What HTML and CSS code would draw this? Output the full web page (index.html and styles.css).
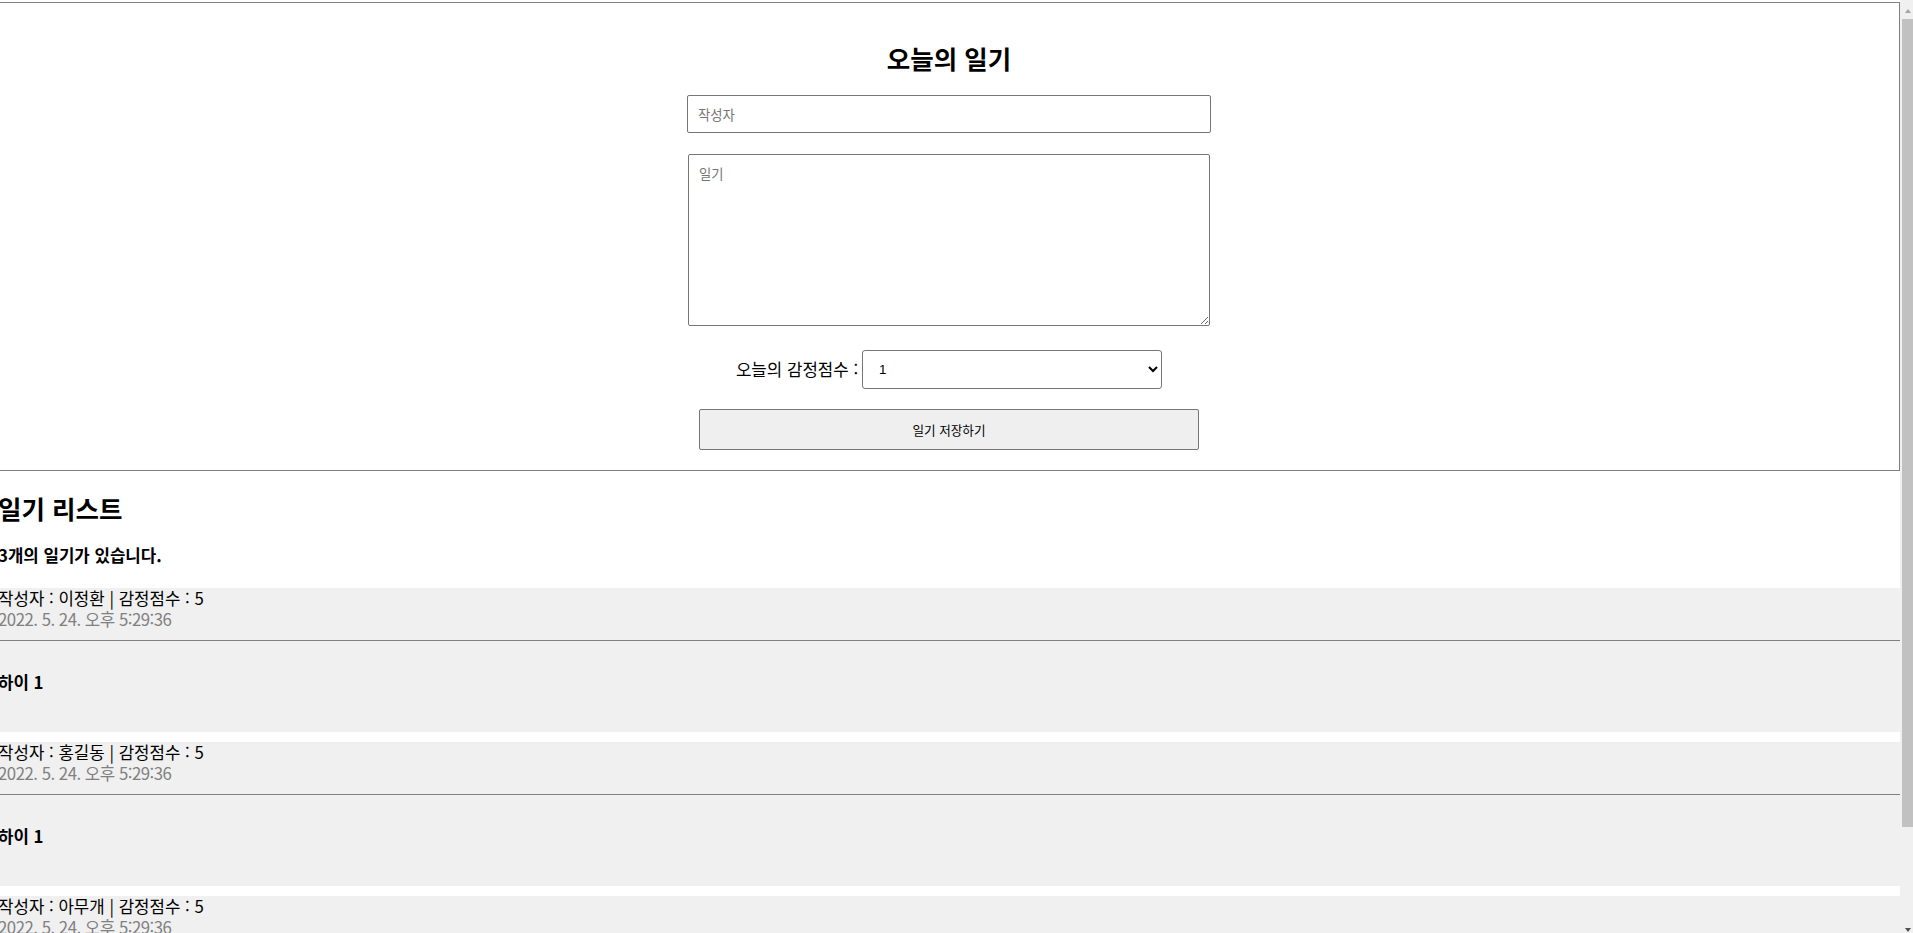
FILE: index.html
```html
<!DOCTYPE html>
<html lang="ko">
<head>
<meta charset="utf-8">
<title>감정 일기장</title>
<link rel="stylesheet" href="styles.css">
</head>
<body>
<div class="app">
  <div class="editor">
    <h2 class="editor-title">오늘의 일기</h2>
    <div class="field field-author"><input class="author" type="text" placeholder="작성자"></div>
    <div class="field field-content"><textarea class="content-input" placeholder="일기"></textarea></div>
    <div class="field field-score">
      <span class="score-label">오늘의 감정점수 :</span>
      <select class="score-select">
        <option>1</option><option>2</option><option>3</option><option>4</option><option>5</option>
      </select>
    </div>
    <div class="field field-save"><button class="save-btn" type="button">일기 저장하기</button></div>
  </div>
  <div class="list">
    <h2 class="list-title">일기 리스트</h2>
    <h4 class="list-count">3개의 일기가 있습니다.</h4>
    <div class="item">
      <div class="info">
        <span class="meta">작성자 : 이정환 | 감정점수 : 5</span>
        <br>
        <span class="date">2022. 5. 24. 오후 5:29:36</span>
      </div>
      <div class="item-content">하이 1</div>
    </div>
    <div class="item">
      <div class="info">
        <span class="meta">작성자 : 홍길동 | 감정점수 : 5</span>
        <br>
        <span class="date">2022. 5. 24. 오후 5:29:36</span>
      </div>
      <div class="item-content">하이 1</div>
    </div>
    <div class="item">
      <div class="info">
        <span class="meta">작성자 : 아무개 | 감정점수 : 5</span>
        <br>
        <span class="date">2022. 5. 24. 오후 5:29:36</span>
      </div>
      <div class="item-content">하이 1</div>
    </div>
  </div>
</div>
<div class="scrollbar">
  <div class="sb-up"></div>
  <div class="sb-thumb"></div>
  <div class="sb-down"></div>
</div>
</body>
</html>
```
FILE: styles.css
```css
html, body {
  margin: 0;
  padding: 0;
  overflow: hidden;
  background: #fff;
}
body {
  padding-top: 2px;
  font-family: "Noto Sans CJK KR", "Noto Sans", sans-serif;
  font-size: 16.8px;
  color: #000;
}
.app {
  margin-left: -2px;
  width: 1902px;
}
.editor {
  border: 1px solid #808080;
  padding: 20px;
  text-align: center;
}
.editor-title {
  font-size: 25.5px;
  line-height: 34px;
  margin: 18px 0 20px;
  font-weight: bold;
}
.field {
  display: flex;
  justify-content: center;
  align-items: center;
}
.field-author { margin-bottom: 21px; }
.field-content { margin-bottom: 24px; }
.field-score { margin-bottom: 20px; gap: 4px; }
.author {
  box-sizing: border-box;
  width: 524px;
  height: 38px;
  padding: 10px;
  border: 1px solid #767676;
  border-radius: 2px;
  font-family: "Noto Sans CJK KR", sans-serif;
  font-size: 13.33px;
  outline: none;
}
.content-input {
  box-sizing: border-box;
  width: 522px;
  height: 172px;
  padding: 10px;
  border: 1px solid #767676;
  border-radius: 2px;
  font-family: "Noto Sans CJK KR", sans-serif;
  font-size: 13.33px;
  line-height: 18px;
  margin: 0;
  display: block;
}
.author::placeholder, .content-input::placeholder {
  color: #757575;
}
.score-label {
  font-size: 16.8px;
  line-height: 21px;
}
.score-select {
  box-sizing: border-box;
  width: 300px;
  height: 39px;
  padding: 0 10px 0 12px;
  border: 1px solid #767676;
  border-radius: 3px;
  background: #fff;
  font-family: "Liberation Sans", sans-serif;
  font-size: 13.33px;
  color: #000;
}
.save-btn {
  box-sizing: border-box;
  width: 500px;
  height: 41px;
  padding: 10px;
  border: 1px solid #767676;
  border-radius: 2px;
  background: #efefef;
  font-family: "Noto Sans CJK KR", sans-serif;
  font-size: 12.6px;
  color: #000;
}
.list-title {
  font-size: 25.5px;
  line-height: 34px;
  margin: 20px 0 0;
  font-weight: bold;
}
.list-count {
  font-size: 16.8px;
  line-height: 23px;
  margin: 19px 0 21px;
  font-weight: bold;
}
.item {
  background: #f0f0f0;
  margin-bottom: 10px;
  display: flow-root;
  font-size: 16.8px;
  line-height: 21px;
}
.info {
  border-bottom: 1px solid #808080;
  padding-bottom: 10px;
}
.date {
  color: #808080;
  letter-spacing: -0.5px;
}
.item-content {
  font-weight: bold;
  margin: 31px 0 39px;
}
.scrollbar {
  position: fixed;
  top: 0;
  right: 0;
  width: 13px;
  height: 933px;
  background: #f0f0f0;
}
.sb-up {
  position: absolute;
  top: 9px;
  left: 5px;
  width: 0;
  height: 0;
  border-left: 3.5px solid transparent;
  border-right: 3.5px solid transparent;
  border-bottom: 4px solid #a3a3a3;
}
.sb-thumb {
  position: absolute;
  top: 19px;
  right: 0;
  width: 11px;
  height: 808px;
  background: #c1c1c1;
}
.sb-down {
  position: absolute;
  top: 928px;
  left: 5px;
  width: 0;
  height: 0;
  border-left: 3.5px solid transparent;
  border-right: 3.5px solid transparent;
  border-top: 4px solid #505050;
}
```
